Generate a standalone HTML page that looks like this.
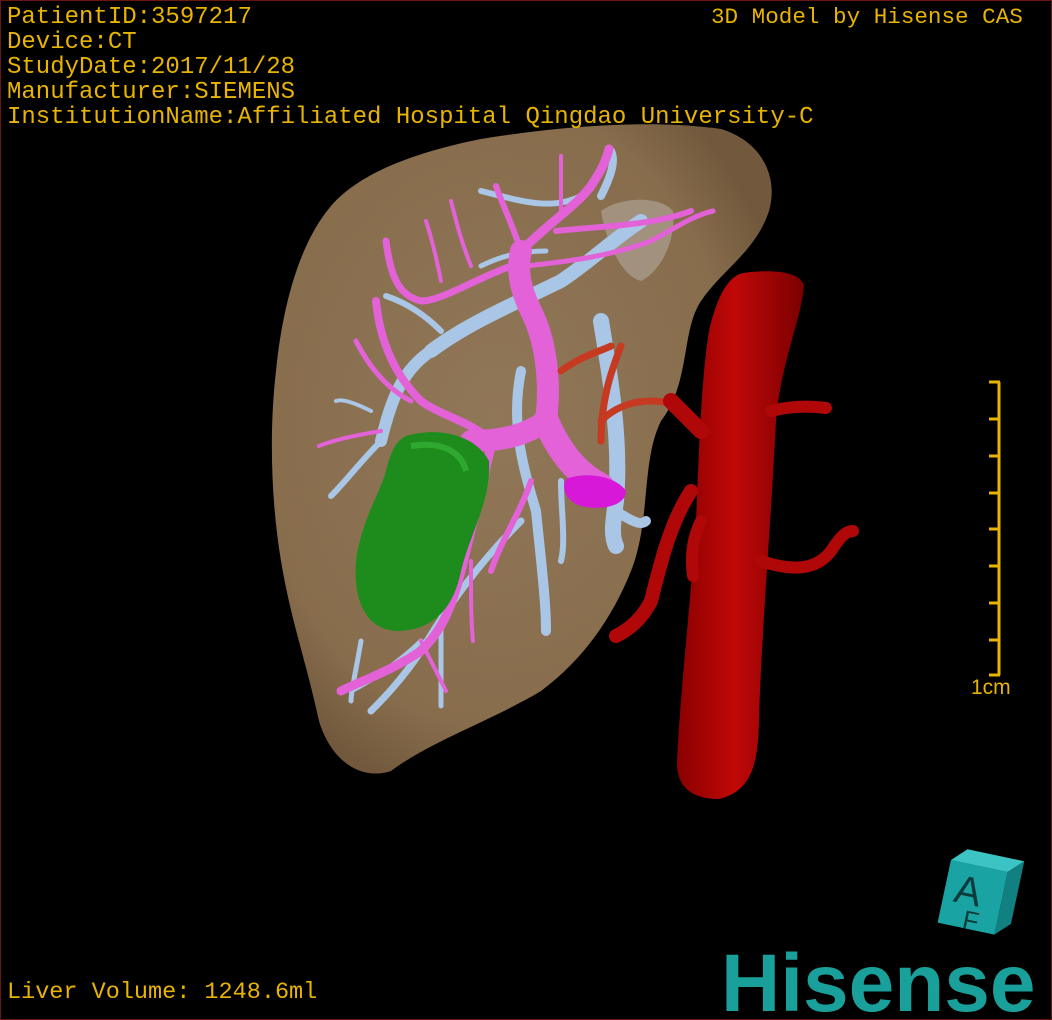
<!DOCTYPE html>
<html><head><meta charset="utf-8"><style>
html,body{margin:0;padding:0;background:#000;}
#f{position:relative;width:1052px;height:1020px;overflow:hidden;background:#000;box-sizing:border-box;border:1px solid #6b1414;}
.t{position:absolute;color:#e8b400;font-family:"Liberation Mono",monospace;font-size:24px;line-height:25px;white-space:pre;}
</style></head><body><div id="f">
<svg width="1052" height="1020" style="position:absolute;left:0;top:0">
<defs>
<radialGradient id="lv" cx="0.45" cy="0.45" r="0.6"><stop offset="0" stop-color="#907758"/><stop offset="0.8" stop-color="#876d4c"/><stop offset="1" stop-color="#72593d"/></radialGradient>
<linearGradient id="ao" x1="0" x2="1"><stop offset="0" stop-color="#8a0000"/><stop offset="0.45" stop-color="#c00808"/><stop offset="1" stop-color="#7a0000"/></linearGradient>
</defs>
<path d="M330,205 C360,170 420,150 480,138 C560,125 650,118 720,128 C760,140 778,175 768,210 C755,250 720,270 700,300 C680,330 690,380 660,420 C640,460 650,520 630,570 C610,620 580,660 540,690 C490,720 430,740 390,770 C360,780 330,760 318,720 C305,660 290,620 280,560 C270,500 268,430 275,370 C282,300 300,240 330,205 Z" fill="url(#lv)"/>
<path d="M600,210 C620,195 660,195 672,210 C675,240 660,270 640,280 C620,275 605,240 600,210 Z" fill="#a79a8a" opacity="0.8"/>
<g fill="none" stroke="#a9c6e6" stroke-linecap="round">
<path d="M430,350 C470,320 520,300 560,280 C590,260 610,240 640,220" stroke-width="14"/>
<path d="M430,350 C400,370 390,400 380,440" stroke-width="12"/>
<path d="M600,320 C610,380 620,440 615,500 C612,520 610,535 615,545" stroke-width="16"/>
<path d="M520,370 C510,420 520,460 535,510 C540,560 545,600 545,630" stroke-width="10"/>
<path d="M380,440 C360,460 345,480 330,495" stroke-width="6"/>
<path d="M440,330 C420,310 400,300 385,295" stroke-width="6"/>
<path d="M480,190 C520,200 550,210 580,195" stroke-width="6"/>
<path d="M545,250 C520,250 500,255 480,265" stroke-width="5"/>
<path d="M520,520 C480,560 450,600 420,650 C400,680 380,700 370,710" stroke-width="7"/>
<path d="M420,640 C400,660 370,680 350,690" stroke-width="5"/>
<path d="M440,600 C440,640 440,680 440,705" stroke-width="5"/>
<path d="M360,640 C355,670 350,690 350,700" stroke-width="5"/>
<path d="M370,410 C350,400 340,398 335,400" stroke-width="4"/>
<path d="M600,195 C610,175 615,160 610,150" stroke-width="8"/>
<path d="M615,510 C630,520 640,525 645,520" stroke-width="10"/>
<path d="M560,480 C560,510 565,540 560,560" stroke-width="6"/>
</g>
<g fill="none" stroke="#e462d8" stroke-linecap="round">
<path d="M470,440 C510,440 530,430 545,420 C550,380 545,340 530,310 C520,290 515,270 520,250" stroke-width="22"/>
<path d="M545,420 C560,455 580,475 600,485" stroke-width="26"/>
<path d="M520,250 C550,220 575,205 590,185 C600,170 605,160 608,148" stroke-width="9"/>
<path d="M510,265 C470,280 440,300 420,300 C400,295 390,280 385,240" stroke-width="7"/>
<path d="M490,440 C470,420 440,415 420,400 C400,380 380,350 375,300" stroke-width="8"/>
<path d="M410,400 C390,390 370,370 355,340" stroke-width="5"/>
<path d="M490,445 C480,490 470,530 460,570 C450,610 440,630 420,650 C390,670 360,680 340,690" stroke-width="9"/>
<path d="M530,480 C520,510 500,540 490,570" stroke-width="6"/>
<path d="M520,250 C510,220 500,200 495,185" stroke-width="6"/>
<path d="M555,230 C600,225 650,225 690,210" stroke-width="6"/>
<path d="M525,265 C570,260 610,255 650,240 C670,230 690,215 712,210" stroke-width="5"/>
<path d="M440,280 C435,255 430,235 425,220" stroke-width="4"/>
<path d="M470,265 C460,240 455,220 450,200" stroke-width="4"/>
<path d="M560,210 C560,190 560,170 560,155" stroke-width="4"/>
<path d="M420,640 C430,660 440,680 445,690" stroke-width="4"/>
<path d="M470,560 C470,600 470,620 472,640" stroke-width="4"/>
<path d="M380,430 C350,435 330,440 318,445" stroke-width="4"/>
</g>
<path d="M565,478 C585,470 615,475 625,490 C625,505 600,510 580,505 C565,500 560,488 565,478 Z" fill="#d818d8"/>
<path d="M600,440 C600,400 610,370 620,345 M560,370 C580,355 600,350 610,345 M600,420 C620,400 650,395 680,405" fill="none" stroke="#c53a20" stroke-width="7" stroke-linecap="round"/>
<path d="M405,435 C440,425 475,435 488,460 C490,500 470,530 460,570 C452,610 430,630 395,630 C365,628 352,600 355,560 C360,520 380,490 385,470 C390,450 395,440 405,435 Z" fill="#1d8c1d"/>
<path d="M410,445 C440,440 460,450 465,470" fill="none" stroke="#2ea82e" stroke-width="6"/>
<path d="M742,272 C770,268 800,270 803,285 C800,320 780,360 775,420 C770,520 760,640 758,720 C757,760 752,790 718,798 C690,798 675,785 676,760 C680,680 690,600 695,520 C698,450 700,380 708,330 C715,300 725,276 742,272 Z" fill="url(#ao)"/>
<g fill="none" stroke="#b00808" stroke-linecap="round">
<path d="M690,490 C670,520 660,560 650,600 C640,620 625,630 615,635" stroke-width="14"/>
<path d="M760,560 C790,570 815,570 830,550 C840,535 845,530 852,530" stroke-width="12"/>
<path d="M770,410 C790,405 810,405 825,407" stroke-width="12"/>
<path d="M700,430 C690,420 680,410 670,400" stroke-width="16"/>
<path d="M700,520 C690,540 690,560 692,575" stroke-width="12"/>
</g>
<g stroke="#e8b400" stroke-width="3" fill="none">
<path d="M998,381 V674"/>
<path d="M988,381H999M988,418H998M988,455H998M988,492H998M988,528H998M988,565H998M988,602H998M988,639H998M988,674H999"/>
</g>
<g transform="translate(975,895) rotate(12)">
<rect x="-32" y="-30" width="58" height="64" fill="#19a3a3"/>
<path d="M-32,-30 L-18,-44 L40,-44 L26,-30 Z" fill="#3cc4c4"/>
<path d="M26,-30 L40,-44 L40,20 L26,34 Z" fill="#128080"/>
<text x="-22" y="10" font-family="Liberation Sans,sans-serif" font-size="40" fill="#0d3b3b">A</text>
<text x="-8" y="34" font-family="Liberation Sans,sans-serif" font-size="26" fill="#0d3b3b">F</text>
</g>
</svg>
<div class="t" style="left:6px;top:4px">PatientID:3597217
Device:CT
StudyDate:2017/11/28
Manufacturer:SIEMENS
InstitutionName:Affiliated Hospital Qingdao University-C</div>
<div class="t" style="left:710px;top:4px;font-size:22.6px">3D Model by Hisense CAS</div>
<div class="t" style="left:970px;top:674px;font-family:'Liberation Sans',sans-serif;font-size:21px">1cm</div>
<div class="t" style="left:6px;top:979px;font-size:23.5px">Liver Volume: 1248.6ml</div>
<div style="position:absolute;left:720px;top:942px;font-family:'Liberation Sans',sans-serif;font-weight:bold;font-size:82px;line-height:82px;color:#1aa09a;letter-spacing:0px">Hisense</div>
</div></body></html>
